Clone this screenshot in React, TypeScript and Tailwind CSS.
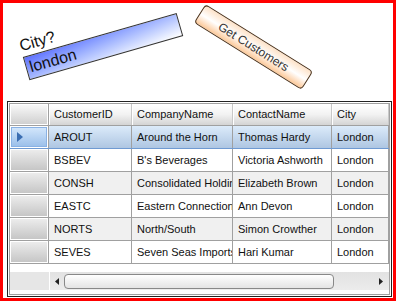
import React from 'react';

const rows = [
  { id: 'AROUT', company: 'Around the Horn', contact: 'Thomas Hardy', city: 'London' },
  { id: 'BSBEV', company: "B's Beverages", contact: 'Victoria Ashworth', city: 'London' },
  { id: 'CONSH', company: 'Consolidated Holdings', contact: 'Elizabeth Brown', city: 'London' },
  { id: 'EASTC', company: 'Eastern Connection', contact: 'Ann Devon', city: 'London' },
  { id: 'NORTS', company: 'North/South', contact: 'Simon Crowther', city: 'London' },
  { id: 'SEVES', company: 'Seven Seas Imports', contact: 'Hari Kumar', city: 'London' },
];

const font = { fontFamily: '"Liberation Sans", Arial, sans-serif' };

const App: React.FC = () => {
  return (
    <div className="w-[396px] h-[301px] bg-white border-[3px] border-[#ff0000] flex flex-col overflow-hidden text-[#111]" style={font}>
      {/* Rotated input + button */}
      <div className="h-[98px] flex items-start shrink-0">
        <div className="ml-[17px] mt-[10px] w-[160px] flex flex-col -rotate-[16deg]">
          <span className="text-[16px] leading-[22px]">City?</span>
          <div className="h-[24px] border border-[#333] bg-gradient-to-br from-[#5f6fff] to-white flex items-center pl-[3px] text-[16px]">
            london
          </div>
        </div>
        <button className="ml-[10px] mt-[33px] w-[127px] h-[22px] rotate-[32deg] rounded-[4px] border border-[#4a3018] bg-gradient-to-b from-[#fde2c8] via-white to-[#fbc898] text-[12px] text-[#333] flex items-center justify-center">
          Get Customers
        </button>
      </div>

      {/* Data grid */}
      <div className="ml-[4px] mr-[1px] border border-[#222] p-[1px] bg-white h-[196px] shrink-0">
        <div className="h-full border border-[#a0a0a0] flex flex-col text-[11px] overflow-hidden">
          {/* header */}
          <div className="flex h-[22px] shrink-0 border-b border-[#a0a0a0]">
            <div className="w-[39px] shrink-0 border-r border-[#a0a0a0] p-[1px]">
              <div className="h-full bg-gradient-to-b from-[#f8f8f8] to-[#d0d0d0]" />
            </div>
            {[
              ['CustomerID', 'w-[83px]'],
              ['CompanyName', 'w-[101px]'],
              ['ContactName', 'w-[99px]'],
              ['City', 'flex-1'],
            ].map(([label, w]) => (
              <div key={label} className={`${w} shrink-0 border-r border-[#c8c8c8] border-l border-l-white bg-gradient-to-b from-white via-[#f2f2f2] to-[#d4d4d4] flex items-center pl-[4px] whitespace-nowrap overflow-hidden`}>
                {label}
              </div>
            ))}
          </div>
          {/* rows */}
          {rows.map((r, i) => {
            const selected = i === 0;
            const bg = selected
              ? 'bg-gradient-to-b from-[#dcebfa] to-[#aec6e2] border-b-[#6f9ad2]'
              : i % 2 === 0
              ? 'bg-[#f0f0f0] border-b-[#a0a0a0]'
              : 'bg-white border-b-[#a0a0a0]';
            return (
              <div key={r.id} className={`flex h-[23px] shrink-0 border-b ${bg}`}>
                <div className="w-[39px] shrink-0 border-r border-[#a0a0a0] bg-white p-[1px]">
                  {selected ? (
                    <div className="h-full border border-[#8ab2e4] bg-gradient-to-b from-[#d2e6fb] to-[#9cc0ea] flex items-center pl-[5px]">
                      <svg width="6" height="10" viewBox="0 0 6 10">
                        <path d="M0 0 L6 5 L0 10 Z" fill="#3b6eb2" />
                      </svg>
                    </div>
                  ) : (
                    <div className="h-full bg-gradient-to-b from-[#ececec] to-[#c6c6c6]" />
                  )}
                </div>
                <div className="w-[83px] shrink-0 border-r border-[#a0a0a0] flex items-center pl-[5px] whitespace-nowrap overflow-hidden">{r.id}</div>
                <div className="w-[101px] shrink-0 border-r border-[#a0a0a0] flex items-center pl-[5px] whitespace-nowrap overflow-hidden">{r.company}</div>
                <div className="w-[99px] shrink-0 border-r border-[#a0a0a0] flex items-center pl-[5px] whitespace-nowrap overflow-hidden">{r.contact}</div>
                <div className="flex-1 border-r border-[#a0a0a0] flex items-center pl-[5px] whitespace-nowrap overflow-hidden">{r.city}</div>
              </div>
            );
          })}
          <div className="h-[8px] shrink-0" />
          {/* horizontal scrollbar */}
          <div className="flex h-[18px] shrink-0 bg-[#e6e6e6]">
            <div className="w-[40px] shrink-0 border-r border-white" />
            <div className="flex-1 flex items-center bg-gradient-to-b from-[#e2e2e2] to-[#ececec]">
              <div className="w-[14px] flex items-center justify-center">
                <svg width="4" height="7" viewBox="0 0 4 7">
                  <path d="M4 0 L0 3.5 L4 7 Z" fill="#222" />
                </svg>
              </div>
              <div className="w-[270px] h-[15px] rounded-[4px] border border-[#888] bg-gradient-to-b from-white to-[#e4e4e4]" />
              <div className="flex-1" />
              <div className="w-[16px] flex items-center justify-center">
                <svg width="4" height="7" viewBox="0 0 4 7">
                  <path d="M0 0 L4 3.5 L0 7 Z" fill="#222" />
                </svg>
              </div>
            </div>
          </div>
        </div>
      </div>
    </div>
  );
};

export default App;
